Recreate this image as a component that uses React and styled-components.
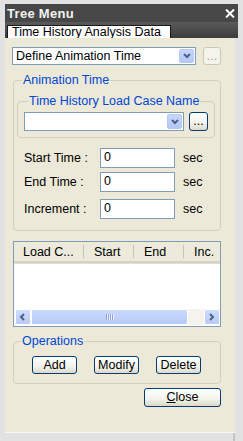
import styled, {createGlobalStyle} from "styled-components";

const Global = createGlobalStyle`
  html, body {
    margin: 0;
    padding: 0;
    background: #dedede;
  }
  * {
    box-sizing: border-box;
  }
`;

const Window = styled.div`
  width: 243px;
  height: 441px;
  background: #e2e2e2;
  padding: 4px 5px 0 5px;
  display: flex;
  flex-direction: column;
  font-family: "Liberation Sans", Arial, sans-serif;
  font-size: 12.5px;
  color: #000;
`;

const TitleBar = styled.div`
  height: 18px;
  background: #474747;
  display: flex;
  align-items: center;
  justify-content: space-between;
  padding: 0 3px 0 2px;
  color: #f2f2f2;
  font-weight: bold;
  font-size: 13px;
  letter-spacing: 0.3px;
`;

const TabStrip = styled.div`
  height: 16px;
  background: linear-gradient(#5a5a5a, #3d3d3d);
  display: flex;
  align-items: flex-end;
  padding-left: 2px;
`;

const Tab = styled.div`
  height: 13px;
  width: 164px;
  background: #fff;
  border: 1px solid #1a1a1a;
  border-bottom: none;
  padding-left: 4px;
  line-height: 12px;
  white-space: nowrap;
`;

const BodyFrame = styled.div`
  flex: 1;
  display: flex;
  padding-right: 5px;
  padding-bottom: 8px;
  background: linear-gradient(to right, #e2e2e2 0, #e2e2e2 calc(100% - 5px), #c4c4c4 calc(100% - 5px), #c4c4c4 calc(100% - 3px), #e2e2e2 calc(100% - 3px));
`;

const Body = styled.div`
  flex: 1;
  background: #ece9d8;
  padding: 9px 14px 0 7px;
  display: flex;
  flex-direction: column;
  border-bottom: 1px solid #f7f7f7;
`;

const Row = styled.div`
  display: flex;
  align-items: center;
  gap: ${(p) => p.gap || 0}px;
`;

const Combo = styled.div`
  width: ${(p) => p.width}px;
  height: ${(p) => p.height || 18}px;
  background: #fff;
  border: 1px solid #7f9db9;
  display: flex;
  align-items: center;
  justify-content: space-between;
  padding: 1px 1px 1px 3px;
  white-space: nowrap;
`;

const ComboArrow = styled.div`
  width: 15px;
  height: 100%;
  background: linear-gradient(#c7d6fb, #b3c8f5);
  border: 1px solid #b5c8f2;
  border-radius: 2px;
  display: flex;
  align-items: center;
  justify-content: center;
`;

const Button = styled.button`
  width: ${(p) => p.width}px;
  height: ${(p) => p.height || 18}px;
  font-family: inherit;
  font-size: 12.5px;
  padding: 0;
  line-height: 1;
  color: ${(p) => (p.disabled ? "#aca899" : "#000")};
  border: 1px solid ${(p) => (p.disabled ? "#c9c7ba" : "#003c74")};
  border-radius: 3px;
  background: ${(p) =>
    p.disabled ? "#f5f4ea" : "linear-gradient(#ffffff, #f3f2ec 60%, #dcd8c8)"};
`;

const Group = styled.fieldset`
  margin: ${(p) => p.margin || "0"};
  padding: ${(p) => p.pad || "0"};
  border: 1px solid #d0d0bf;
  border-radius: 4px;
  min-width: 0;
`;

const Legend = styled.legend`
  color: #0046d5;
  padding: 0 1px;
  margin-left: ${(p) => p.offset || 7}px;
  line-height: 13px;
`;

const FieldRow = styled.div`
  display: flex;
  align-items: center;
  margin-top: ${(p) => p.top}px;
  padding-left: 7px;
`;

const FieldLabel = styled.span`
  width: 76px;
  white-space: nowrap;
`;

const Input = styled.div`
  width: 75px;
  height: 20px;
  border: 1px solid #7f9db9;
  background: #fff;
  padding: 1px 0 0 3px;
  line-height: 15px;
`;

const Unit = styled.span`
  margin-left: 8px;
`;

const List = styled.div`
  margin: 10px 0 0 1px;
  height: 86px;
  border: 1px solid #7f9db9;
  background: #fff;
  display: flex;
  flex-direction: column;
`;

const Header = styled.div`
  height: 21px;
  display: flex;
  background: #ebeadb;
  border-bottom: 2px solid #d6d3c4;
  box-shadow: 0 1px 0 #e2decd;
`;

const HeaderCell = styled.div`
  width: ${(p) => p.width}px;
  padding-left: ${(p) => p.pl}px;
  display: flex;
  align-items: center;
  white-space: nowrap;
  overflow: hidden;
  position: relative;
  &:not(:last-child)::after {
    content: "";
    position: absolute;
    right: 0;
    top: 3px;
    bottom: 3px;
    width: 1px;
    background: #c7c5b2;
    box-shadow: 1px 0 0 #fff;
  }
`;

const ListBody = styled.div`
  flex: 1;
`;

const ScrollBar = styled.div`
  height: 16px;
  margin: 0 0 1px 1px;
  display: flex;
  background: #f4f3ee;
`;

const ScrollArrow = styled.div`
  width: 16px;
  height: 100%;
  background: linear-gradient(#cfdcfd, #b8cbf6);
  border: 1px solid #fff;
  border-radius: 2px;
  display: flex;
  align-items: center;
  justify-content: center;
`;

const Thumb = styled.div`
  width: 157px;
  height: 100%;
  background: linear-gradient(#cad8fc, #b7cbf7);
  border: 1px solid #fff;
  border-radius: 2px;
  display: flex;
  align-items: center;
  justify-content: center;
`;

const Grip = styled.div`
  width: 8px;
  height: 6px;
  background: repeating-linear-gradient(to right, #8ca3d9 0 1px, #eef3ff 1px 2px);
`;

const Track = styled.div`
  flex: 1;
`;

const OpsRow = styled.div`
  display: flex;
  gap: 17px;
  padding: 8px 0 9px 18px;
`;

const CloseRow = styled.div`
  display: flex;
  justify-content: flex-end;
  margin-top: 4px;
`;

const Chevron = ({dir = "down", color = "#4d6185"}) => {
  const pts = {
    down: "1,2 4,5 7,2",
    left: "5,1 2,4 5,7",
    right: "2,1 5,4 2,7",
  }[dir];
  return (
    <svg width="8" height="8" viewBox="0 0 8 8">
      <polyline points={pts} fill="none" stroke={color} strokeWidth="2"/>
    </svg>
  );
};

const CloseX = () => (
  <svg width="10" height="9" viewBox="0 0 10 9">
    <path d="M1 0.5 L9 8.5 M9 0.5 L1 8.5" stroke="#fff" strokeWidth="2"/>
  </svg>
);

const App = () => {
  return (
    <>
      <Global/>
      <Window>
        <TitleBar>
          <span>Tree Menu</span>
          <CloseX/>
        </TitleBar>
        <TabStrip>
          <Tab>Time History Analysis Data</Tab>
        </TabStrip>
        <BodyFrame>
          <Body>
            <Row gap={7}>
              <Combo width={184}>
                <span>Define Animation Time</span>
                <ComboArrow><Chevron/></ComboArrow>
              </Combo>
              <Button width={18} disabled>...</Button>
            </Row>

            <Group margin="9px 0 0 1px" pad="0 5px 11px 3px">
              <Legend offset={5}>Animation Time</Legend>
              <Group margin="8px 0 0 0" pad="4px 4px 6px 6px">
                <Legend offset={4}>Time History Load Case Name</Legend>
                <Row gap={5}>
                  <Combo width={160} height={19}>
                    <span/>
                    <ComboArrow><Chevron/></ComboArrow>
                  </Combo>
                  <Button width={19} height={19}>...</Button>
                </Row>
              </Group>
              <FieldRow top={10}>
                <FieldLabel>Start Time :</FieldLabel>
                <Input>0</Input>
                <Unit>sec</Unit>
              </FieldRow>
              <FieldRow top={4}>
                <FieldLabel>End Time :</FieldLabel>
                <Input>0</Input>
                <Unit>sec</Unit>
              </FieldRow>
              <FieldRow top={7}>
                <FieldLabel>Increment :</FieldLabel>
                <Input>0</Input>
                <Unit>sec</Unit>
              </FieldRow>
            </Group>

            <List>
              <Header>
                <HeaderCell width={70} pl={9}>Load C...</HeaderCell>
                <HeaderCell width={50} pl={10}>Start</HeaderCell>
                <HeaderCell width={50} pl={10}>End</HeaderCell>
                <HeaderCell width={34} pl={10}>Inc.</HeaderCell>
              </Header>
              <ListBody/>
              <ScrollBar>
                <ScrollArrow><Chevron dir="left"/></ScrollArrow>
                <Thumb><Grip/></Thumb>
                <Track/>
                <ScrollArrow><Chevron dir="right"/></ScrollArrow>
              </ScrollBar>
            </List>

            <Group margin="8px 0 0 1px" pad="0">
              <Legend offset={7}>Operations</Legend>
              <OpsRow>
                <Button width={45}>Add</Button>
                <Button width={45}>Modify</Button>
                <Button width={45}>Delete</Button>
              </OpsRow>
            </Group>

            <CloseRow>
              <Button width={77} height={19}><u>C</u>lose</Button>
            </CloseRow>
          </Body>
        </BodyFrame>
      </Window>
    </>
  );
};

export default App;
